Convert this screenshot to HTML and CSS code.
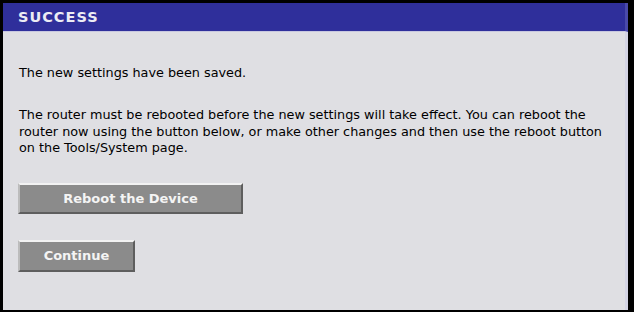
FILE: index.html
```html
<!DOCTYPE html>
<html>
<head>
<meta charset="utf-8">
<link rel="stylesheet" href="styles.css">
</head>
<body>
<div class="box">
  <div class="header">SUCCESS</div>
  <div class="content">
    <p class="msg first">The new settings have been saved.</p>
    <p class="msg">The router must be rebooted before the new settings will take effect. You can reboot the router now using the button below, or make other changes and then use the reboot button on the Tools/System page.</p>
    <div class="buttons">
      <button class="btn btn-wide">Reboot the Device</button>
      <button class="btn btn-narrow">Continue</button>
    </div>
  </div>
</div>
</body>
</html>
```
FILE: styles.css
```css
html, body {
  margin: 0;
  padding: 0;
  background: #000;
}
.box {
  width: 634px;
  height: 312px;
  box-sizing: border-box;
  border-style: solid;
  border-color: #000;
  border-width: 3px 6px 2px 3px;
  background: #dfdfe3;
  display: flex;
  flex-direction: column;
  font-family: "DejaVu Sans", Verdana, sans-serif;
}
.header {
  height: 28px;
  background: #2f2f9b;
  border-right: 3px solid #4a4aaa;
  border-bottom: 1px solid #c8c8e0;
  color: #ececf4;
  font-weight: bold;
  font-size: 14.5px;
  letter-spacing: 1px;
  line-height: 29px;
  padding-left: 15px;
}
.content {
  flex: 1;
  padding: 33px 8px 0 16px;
  border-right: 3px solid #d4d4e4;
}
.msg {
  margin: 0 0 25.5px 0;
  font-size: 12.8px;
  line-height: 16.5px;
  color: #000;
}
.msg:last-of-type {
  margin-bottom: 26px;
}
.buttons {
  display: flex;
  flex-direction: column;
  align-items: flex-start;
  gap: 26px;
}
.btn {
  background: #8b8b8b;
  color: #f4f4f4;
  font-family: "DejaVu Sans", Verdana, sans-serif;
  font-weight: bold;
  font-size: 13px;
  border-style: solid;
  border-width: 2px;
  border-color: #f2f2f2 #5e5e5e #5e5e5e #bcbcbc;
  padding: 0;
  height: 31px;
  margin-left: -1px;
}
.btn-wide { width: 225px; }
.btn-narrow { width: 117px; height: 32px; }
```
